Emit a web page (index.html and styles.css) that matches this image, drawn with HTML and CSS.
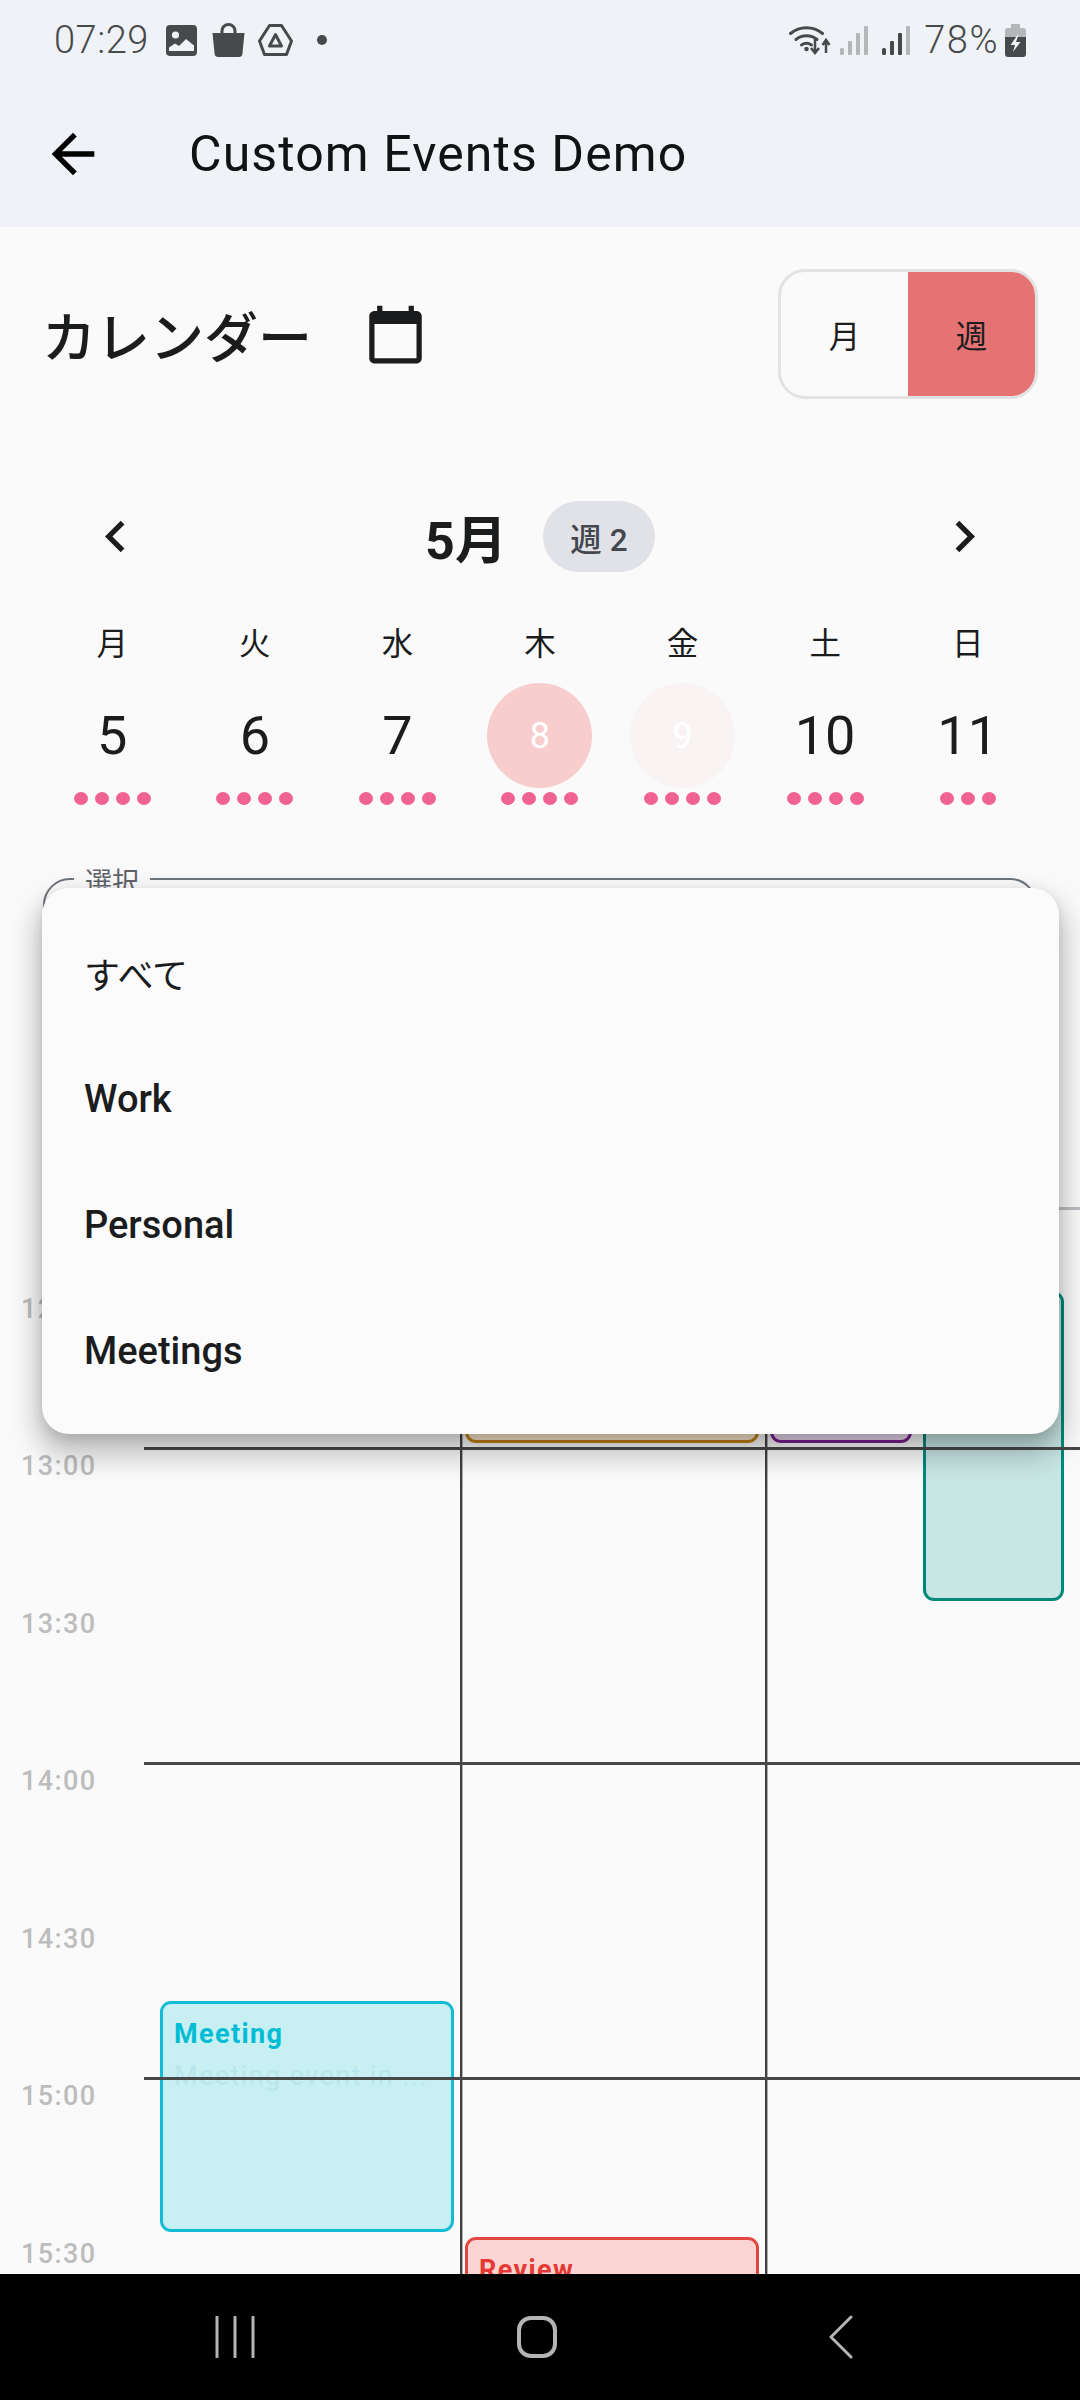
FILE: index.html
```html
<!DOCTYPE html>
<html lang="ja">
<head>
  <meta charset="UTF-8">
  <title>Custom Events Demo</title>
  <link rel="stylesheet" href="styles.css">
</head>
<body>

  <header class="topbar">
    <div class="status">
      <span class="clock">07:29</span>
      <svg class="st-photo" viewBox="0 0 31 31"><rect width="31" height="31" rx="4" fill="#48494b"/><circle cx="9.500" cy="10" r="3.600" fill="#eff3f7"/><path d="M3 26v-3.500l6-4 4 2.500 7-7 8 6.500V26z" fill="#eff3f7"/></svg>
      <svg class="st-bag" viewBox="0 0 33 34"><path d="M10 11V8a6.500 6.500 0 0 1 13 0v3" fill="none" stroke="#48494b" stroke-width="3"/><path d="M0.500 10h32l-2 20a4 4 0 0 1-4 4h-20a4 4 0 0 1-4-4z" fill="#48494b"/></svg>
      <svg class="st-drive" viewBox="0 0 35 32"><path d="M11.500 1.500h12L33.500 17l-5 13.500h-22L1.500 17z" fill="none" stroke="#48494b" stroke-width="3" stroke-linejoin="round"/><path d="M17.500 10.500l6 11.500h-12z" fill="none" stroke="#48494b" stroke-width="3" stroke-linejoin="round"/></svg>
      <span class="st-dot"></span>
      <span class="status-gap"></span>
      <svg class="st-wifi" viewBox="0 0 42 32"><g fill="none" stroke="#48494b" stroke-width="3" stroke-linecap="round"><path d="M1.500 9.500a25 25 0 0 1 32 0"/><path d="M7 15.500a17 17 0 0 1 21 0"/><path d="M12.500 21a9 9 0 0 1 10 0"/></g><circle cx="17.500" cy="25" r="2.300" fill="#48494b"/><path d="M26 15v13m-4-4 4 5 4-5M37 29V17m-3.500 4 3.500-5 3.500 5" fill="none" stroke="#48494b" stroke-width="2.500"/></svg>
      <svg class="st-signal" viewBox="0 0 28 29"><g fill="#b4b7ba"><rect x="0" y="22" width="4" height="7" rx="1.500"/><rect x="8" y="15" width="4" height="14" rx="1"/><rect x="16" y="7" width="4" height="22" rx="1"/><rect x="24" y="0" width="4" height="29" rx="1"/></g></svg>
      <svg class="st-signal st-signal-b" viewBox="0 0 28 29"><g fill="#48494b"><rect x="0" y="22" width="4" height="7" rx="1.500"/><rect x="8" y="15" width="4" height="14" rx="1"/><rect x="16" y="7" width="4" height="22" rx="1"/></g><rect x="24" y="0" width="4" height="29" rx="1" fill="#b4b7ba"/></svg>
      <span class="battery-pct">78%</span>
      <svg class="st-battery" viewBox="0 0 21 33"><path d="M6 0h9v4h3a3 3 0 0 1 3 3v6H0V7a3 3 0 0 1 3-3h3z" fill="#b4b7ba"/><path d="M0 13h21v17a3 3 0 0 1-3 3H3a3 3 0 0 1-3-3z" fill="#48494b"/><path d="M12.500 11 5.500 21h4.500l-2 7 7.500-10H11l2.500-7z" fill="#eff3f7"/></svg>
    </div>
    <div class="appbar">
      <svg class="back-icon" viewBox="0 0 24 24"><path d="M20 11H7.830l5.590-5.590L12 4l-8 8 8 8 1.410-1.410L7.830 13H20v-2z"/></svg>
      <h1 class="appbar-title">Custom Events Demo</h1>
    </div>
  </header>

  <section class="cal-head">
    <h2 class="cal-title">カレンダー</h2>
    <svg class="cal-icon" viewBox="0 0 24 24"><path d="M20 3h-1V1h-2v2H7V1H5v2H4c-1.100 0-2 .900-2 2v16c0 1.100.900 2 2 2h16c1.100 0 2-.900 2-2V5c0-1.100-.900-2-2-2zm0 18H4V8h16v13z"/></svg>
    <div class="toggle">
      <span class="toggle-item">月</span>
      <span class="toggle-item toggle-on">週</span>
    </div>
  </section>

  <section class="month-nav">
    <svg class="chev" viewBox="0 0 24 24"><path d="M15.410 7.410L14 6l-6 6 6 6 1.410-1.410L10.830 12z"/></svg>
    <div class="month-label">
      <span class="month">5月</span>
      <span class="week-pill">週 2</span>
    </div>
    <svg class="chev" viewBox="0 0 24 24"><path d="M10 6L8.590 7.410 13.170 12l-4.580 4.590L10 18l6-6z"/></svg>
  </section>

  <section class="week">
    <div class="week-row">
      <span class="weekday">月</span>
      <span class="weekday">火</span>
      <span class="weekday">水</span>
      <span class="weekday">木</span>
      <span class="weekday">金</span>
      <span class="weekday">土</span>
      <span class="weekday">日</span>
    </div>
    <div class="day-row">
      <div class="day"><span class="day-num">5</span><span class="dots"><i></i><i></i><i></i><i></i></span></div>
      <div class="day"><span class="day-num">6</span><span class="dots"><i></i><i></i><i></i><i></i></span></div>
      <div class="day"><span class="day-num">7</span><span class="dots"><i></i><i></i><i></i><i></i></span></div>
      <div class="day"><span class="day-num is-selected">8</span><span class="dots"><i></i><i></i><i></i><i></i></span></div>
      <div class="day"><span class="day-num is-today">9</span><span class="dots"><i></i><i></i><i></i><i></i></span></div>
      <div class="day"><span class="day-num">10</span><span class="dots"><i></i><i></i><i></i><i></i></span></div>
      <div class="day"><span class="day-num">11</span><span class="dots"><i></i><i></i><i></i></span></div>
    </div>
  </section>

  <div class="filter">
    <span class="filter-label">選択</span>
  </div>

  <main class="timeline">
    <div class="hours">
      <span class="hour">12:30</span>
      <span class="hour">13:00</span>
      <span class="hour">13:30</span>
      <span class="hour">14:00</span>
      <span class="hour">14:30</span>
      <span class="hour">15:00</span>
      <span class="hour">15:30</span>
    </div>
    <div class="grid">
      <div class="event ev-orange"></div>
      <div class="event ev-purple"></div>
      <div class="event ev-teal"></div>
      <div class="event ev-cyan">
        <div class="event-title">Meeting</div>
        <div class="event-desc">Meeting event in ...</div>
      </div>
      <div class="event ev-red">
        <div class="event-title">Review</div>
      </div>
      <div class="grid-cols"><span class="col col-a"></span><span class="col col-b"></span></div>
      <div class="grid-rows"><span class="row"></span><span class="row"></span><span class="row"></span></div>
    </div>
  </main>

  <nav class="navbar">
    <svg class="nav-recent" viewBox="0 0 40 42"><path d="M2 1v40M20 1v40M38 1v40"/></svg>
    <svg class="nav-home" viewBox="0 0 40 42"><rect x="2" y="2" width="36" height="38" rx="12"/></svg>
    <svg class="nav-back" viewBox="0 0 24 44"><path d="M22 2 2 22l20 20"/></svg>
  </nav>

  <ul class="menu">
    <li class="menu-item menu-all">すべて</li>
    <li class="menu-item">Work</li>
    <li class="menu-item">Personal</li>
    <li class="menu-item">Meetings</li>
  </ul>

</body>
</html>
```

FILE: styles.css
```css
* {
  box-sizing: border-box;
}

html, body {
  margin: 0;
  padding: 0;
}

body {
  position: relative;
  width: 1080px;
  height: 2400px;
  overflow: hidden;
  display: flex;
  flex-direction: column;
  background: #fafafa;
  color: #1a1c1e;
  font-family: Roboto, "Noto Sans CJK JP", sans-serif;
}

svg {
  display: block;
  flex: none;
}

/* status + app bar */
.topbar {
  height: 227px;
  background: #eff3f7;
}

.status {
  height: 80px;
  padding: 0 54px;
  display: flex;
  align-items: center;
  color: #48494b;
}

.clock, .battery-pct {
  font-size: 38px;
  font-weight: 300;
  line-height: 80px;
  letter-spacing: 0.5px;
}

.st-photo { width: 31px; height: 31px; margin-left: 17px; }
.st-bag { width: 33px; height: 34px; margin-left: 15px; }
.st-drive { width: 35px; height: 32px; margin-left: 13px; }
.st-dot { width: 10px; height: 10px; margin-left: 24px; border-radius: 50%; background: #48494b; }
.status-gap { flex: 1; }
.st-wifi { width: 42px; height: 32px; }
.st-signal { width: 28px; height: 29px; margin-left: 9px; }
.st-signal-b { margin-left: 14px; }
.battery-pct { margin-left: 14px; letter-spacing: 1.5px; }
.st-battery { width: 21px; height: 33px; margin-left: 6px; }

.appbar {
  height: 147px;
  display: flex;
  align-items: center;
  padding-left: 41px;
}

.back-icon {
  width: 64px;
  height: 64px;
  fill: #000;
}

.appbar-title {
  margin: 0 0 0 84px;
  font-size: 50px;
  font-weight: 400;
  letter-spacing: 1.1px;
  color: #101214;
}

/* calendar header */
.cal-head {
  display: flex;
  align-items: center;
  padding: 42px 42px 0;
}

.cal-title {
  margin: 0;
  font-size: 54px;
  font-weight: 500;
  width: 322px;
  white-space: nowrap;
}

.cal-icon {
  width: 63px;
  height: 63px;
  fill: #1a1c1e;
}

.toggle {
  display: flex;
  margin-left: auto;
  width: 260px;
  height: 130px;
  border: 3px solid #e2e2e2;
  border-radius: 27px;
  overflow: hidden;
}

.toggle-item {
  flex: 1;
  display: flex;
  align-items: center;
  justify-content: center;
  font-size: 31.5px;
}

.toggle-on {
  background: #e57373;
}

/* month navigation */
.month-nav {
  display: flex;
  align-items: center;
  justify-content: space-between;
  height: 71px;
  margin-top: 102px;
  padding: 0 84px;
}

.chev {
  width: 63px;
  height: 63px;
  fill: #1a1c1e;
}

.month-label {
  display: flex;
  align-items: center;
  gap: 36px;
}

.month {
  font-size: 52px;
  font-weight: 700;
}

.week-pill {
  width: 112px;
  height: 71px;
  display: flex;
  align-items: center;
  justify-content: center;
  border-radius: 36px;
  background: #e1e2e7;
  color: #44474e;
  font-size: 31.5px;
  font-weight: 500;
}

/* week strip */
.week {
  padding: 0 41px;
}

.week-row, .day-row {
  display: grid;
  grid-template-columns: repeat(7, 1fr);
}

.week-row {
  height: 40px;
  margin-top: 51px;
}

.weekday {
  text-align: center;
  font-size: 31.5px;
  line-height: 43px;
}

.day-row {
  margin-top: 20px;
}

.day {
  display: flex;
  flex-direction: column;
  align-items: center;
}

.day-num {
  width: 105px;
  height: 105px;
  display: flex;
  align-items: center;
  justify-content: center;
  border-radius: 50%;
  font-size: 54px;
}

.is-selected {
  background: #f8cdcd;
  color: #fff;
  font-size: 36px;
}

.is-today {
  background: #f9f3f3;
  color: #fff;
  font-size: 36px;
}

.dots {
  display: flex;
  gap: 7px;
  margin-top: 4px;
}

.dots i {
  width: 14px;
  height: 13px;
  border-radius: 50%;
  background: #f06292;
}

/* dropdown field behind the menu */
.filter {
  position: relative;
  height: 120px;
  margin: 73px 43px 0;
  border: 2px solid #6e747b;
  border-radius: 27px;
}

.filter-label {
  position: absolute;
  left: 29px;
  top: -12px;
  padding: 0 11px;
  background: #fafafa;
  color: #5f6368;
  font-size: 27px;
  line-height: 30px;
}

/* day timeline */
.timeline {
  flex: 1;
  display: flex;
  margin-top: 209px;
  overflow: hidden;
}

.hours {
  width: 144px;
  flex: none;
  padding: 23px 0 0 21px;
}

.hour {
  display: flex;
  align-items: center;
  height: 157.5px;
  color: #bdbdbd;
  font-size: 27px;
  font-weight: 500;
  letter-spacing: 1.4px;
}

.grid {
  position: relative;
  flex: 1;
  border-top: 3px solid #bcbec4;
}

.grid-cols {
  position: absolute;
  inset: 0;
}

.col {
  position: absolute;
  top: 0;
  bottom: 0;
  width: 2px;
  background: #404040;
  box-shadow: 1px 0 0 rgba(64,64,64,0.4);
}

.col-a { left: 316px; }
.col-b { left: 621px; }

.grid-rows {
  position: absolute;
  inset: 237px 0 0;
}

.row {
  display: block;
  height: 315px;
  border-top: 3px solid #484848;
}

.event {
  position: absolute;
  border: 3px solid;
  border-radius: 11px;
  padding: 14px 11px;
  overflow: hidden;
}

.ev-orange { left: 321px; top: 0; width: 294px; height: 233px; background: #fdeccf; border-color: #c8820f; }
.ev-purple { left: 626px; top: 0; width: 142px; height: 233px; background: #eddaf0; border-color: #7b1f93; }
.ev-teal { left: 779px; top: 81px; width: 141px; height: 310px; background: #c8e6e4; border-color: #00897b; }
.ev-cyan { left: 16px; top: 791px; width: 294px; height: 231px; background: #c8eff2; border-color: #13bcd4; color: #00bcd4; }
.ev-red { left: 321px; top: 1027px; width: 294px; height: 200px; background: #fbd5d3; border-color: #e0483f; color: #e53935; }

.event-title {
  font-size: 27px;
  font-weight: 700;
  line-height: 32px;
  letter-spacing: 1.4px;
}

.event-desc {
  margin-top: 10px;
  font-size: 27px;
  line-height: 32px;
  letter-spacing: 1.4px;
  color: #b8e6ec;
  white-space: nowrap;
}

/* android nav */
.navbar {
  height: 126px;
  flex: none;
  position: relative;
  z-index: 2;
  background: #000;
  display: flex;
  align-items: center;
  padding: 0 0 0 215px;
}

.navbar svg {
  fill: none;
  stroke: #b4b4b4;
  stroke-width: 3;
  stroke-linecap: round;
  stroke-linejoin: round;
}

.nav-recent { width: 40px; height: 42px; }
.nav-home { width: 40px; height: 42px; margin-left: 262px; }
.nav-back { width: 24px; height: 44px; margin-left: 272px; }

.nav-home rect {
  stroke-width: 4;
}

/* open dropdown */
.menu {
  position: absolute;
  left: 42px;
  top: 888px;
  width: 1017px;
  height: 546px;
  margin: 0;
  padding: 22px 0 0;
  list-style: none;
  background: #fbfbfb;
  border-radius: 27px;
  box-shadow: 0 16px 30px 4px rgba(0,0,0,0.26), 0 5px 12px rgba(0,0,0,0.1);
}

.menu-item {
  height: 126px;
  display: flex;
  align-items: center;
  padding-left: 42px;
  font-size: 38px;
  font-weight: 500;
}

.menu-all {
  font-size: 36px;
  font-weight: 400;
}
```
